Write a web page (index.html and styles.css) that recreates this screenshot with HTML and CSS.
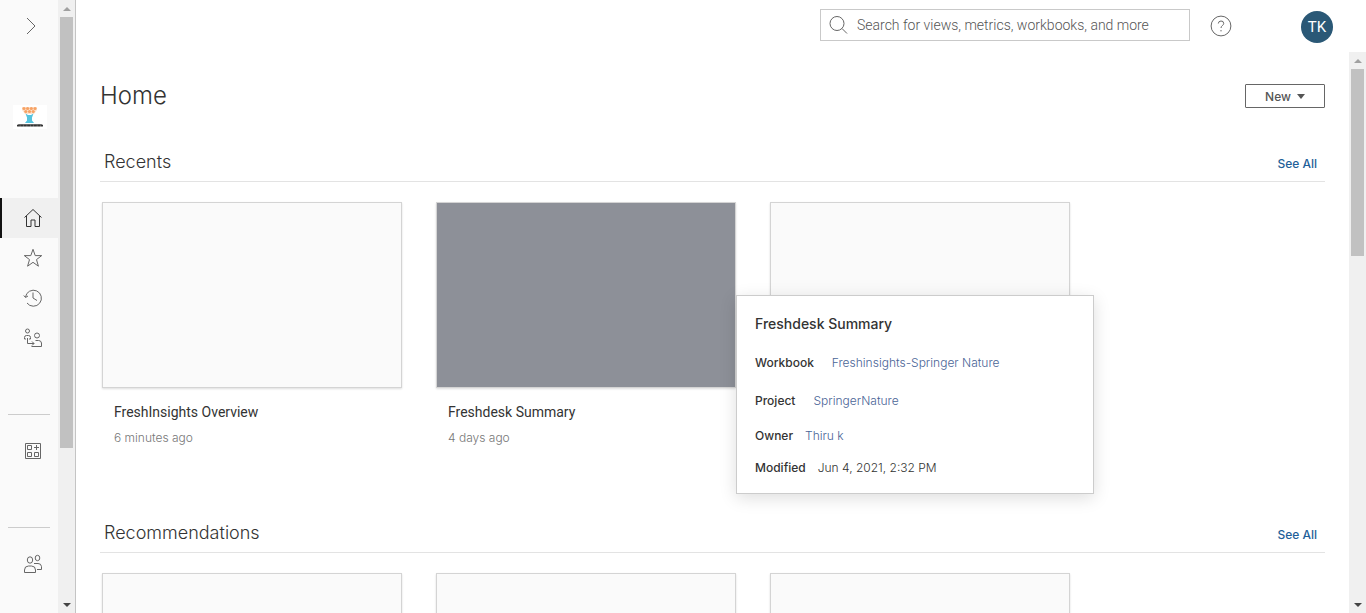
FILE: index.html
```html
<!DOCTYPE html>
<html lang="en">
<head>
<meta charset="utf-8">
<title>Home</title>
<link rel="stylesheet" href="styles.css">
</head>
<body>
<div class="app">
  <aside class="sidebar">
    <nav class="rail" aria-label="Main">
      <button class="expand" type="button" aria-label="Expand navigation">
        <svg width="12" height="18" viewBox="0 0 12 18"><path d="M2 1l8 8-8 8"/></svg>
      </button>
      <a class="logo" href="#" aria-label="Site logo">
        <svg width="34" height="24" viewBox="0 0 34 24">
          <rect width="34" height="24" fill="#fff"/>
          <path d="M9 2h15v3l-3 4h-9L9 5z" fill="#fde3cf"/>
          <g fill="#f7a264"><circle cx="11" cy="3.500" r="1.600"/><circle cx="14.600" cy="3.500" r="1.600"/><circle cx="18.300" cy="3.500" r="1.600"/><circle cx="22" cy="3.500" r="1.600"/><circle cx="12.800" cy="6.500" r="1.600"/><circle cx="16.500" cy="6.500" r="1.600"/><circle cx="20.200" cy="6.500" r="1.600"/></g>
          <path d="M12.500 8.500l2.500 1.500h3l2.500-1.500-1.500 4v3l2 2.500h-9l2-2.500v-3z" fill="#55c3de"/>
          <path d="M4 21.500l1.500-2.500h23l1.500 2.500z" fill="#777"/>
          <path d="M4 20.500h26" stroke="#333" stroke-width="1.500" stroke-dasharray="2.800 .6"/>
        </svg>
      </a>
      <a class="item active" href="#" aria-label="Home">
        <svg width="20" height="20" viewBox="0 0 20 20"><path d="M1.500 9.500L10 1.500l8.500 8M3.500 8v10.500h4.500V12h4v6.500h4.500V8"/></svg>
      </a>
      <a class="item" href="#" aria-label="Favorites">
        <svg width="20" height="20" viewBox="0 0 20 20"><path d="M10 1.300l2.200 6.300h6.500l-5.200 4 1.900 6.600L10 14.300l-5.400 3.900 1.900-6.600-5.200-4h6.500z"/></svg>
      </a>
      <a class="item" href="#" aria-label="Recents">
        <svg width="20" height="20" viewBox="0 0 20 20"><path d="M2.500 9A8 8 0 1 1 4 15M10 4.500V10l4 2.500M.8 7.500l1.700 2L5 8"/></svg>
      </a>
      <a class="item" href="#" aria-label="Shared with me">
        <svg width="20" height="20" viewBox="0 0 20 20"><circle cx="4.500" cy="3" r="2"/><circle cx="14" cy="7.500" r="2.500"/><path d="M1.500 11V9.500a2 2 0 0 1 2-2h2a2 2 0 0 1 2 2V11H6M1.500 11H3M4.500 10v5.500H11M9 13.500l2 2-2 2M8.500 18.500h10V15a3 3 0 0 0-3-2.500h-3"/></svg>
      </a>
      <div class="group">
        <a class="item" href="#" aria-label="Collections">
          <svg width="20" height="20" viewBox="0 0 20 20"><path d="M2.500 2.500h15v15h-15zM4.500 4.500h4v4h-4zM4.500 11.500h4v4h-4zM11.500 11.500h4v4h-4zM13.500 4v5M11 6.500h5"/></svg>
        </a>
      </div>
      <div class="group">
        <a class="item" href="#" aria-label="Users">
          <svg width="20" height="20" viewBox="0 0 20 20"><ellipse cx="7" cy="6" rx="2.700" ry="3.200"/><ellipse cx="14.500" cy="4" rx="2.300" ry="2.700"/><path d="M1.500 18.500V16a4 4 0 0 1 4-4h3a4 4 0 0 1 4 4v2.500zM11 9.500h4a3.500 3.500 0 0 1 3.500 3v3H14"/></svg>
        </a>
      </div>
    </nav>
    <div class="scrollbar" aria-hidden="true">
      <i class="arrow up"></i><div class="track"><i class="thumb rail-thumb"></i></div><i class="arrow down"></i>
    </div>
  </aside>

  <div class="page">
    <header class="topbar">
      <label class="search">
        <svg width="20" height="20" viewBox="0 0 20 20"><circle cx="8" cy="8.500" r="7"/><path d="M13 13.500l5 5"/></svg>
        <input type="search" aria-label="Search" placeholder="Search for views, metrics, workbooks, and more">
      </label>
      <button class="help" type="button" aria-label="Help">
        <svg width="22" height="22" viewBox="0 0 22 22"><circle cx="11" cy="11" r="9.900"/><path d="M8.300 8.500A2.700 2.700 0 0 1 11 6a2.500 2.500 0 0 1 2.700 2.500c0 2-2.700 2-2.700 4.500M11 15v1.400"/></svg>
      </button>
      <button class="avatar" type="button">TK</button>
    </header>

    <div class="body">
      <main class="content">
        <div class="title-row">
          <h1>Home</h1>
          <button class="new" type="button">New <i class="caret"></i></button>
        </div>

        <section>
          <div class="section-head"><h2>Recents</h2><a href="#">See All</a></div>
          <div class="cards">
            <article class="card">
              <div class="thumbnail"></div>
              <h3>FreshInsights Overview</h3>
              <p>6 minutes ago</p>
            </article>
            <article class="card">
              <div class="thumbnail hovered"></div>
              <h3>Freshdesk Summary</h3>
              <p>4 days ago</p>
              <div class="tooltip" role="tooltip">
                <h4>Freshdesk Summary</h4>
                <dl>
                  <div class="row wide"><dt>Workbook</dt><dd><a href="#">Freshinsights-Springer Nature</a></dd></div>
                  <div class="row wide"><dt>Project</dt><dd><a href="#">SpringerNature</a></dd></div>
                  <div class="row"><dt>Owner</dt><dd><a href="#">Thiru k</a></dd></div>
                  <div class="row"><dt>Modified</dt><dd>Jun 4, 2021, 2:32 PM</dd></div>
                </dl>
              </div>
            </article>
            <article class="card"><div class="thumbnail"></div></article>
          </div>
        </section>

        <section>
          <div class="section-head"><h2>Recommendations</h2><a href="#">See All</a></div>
          <div class="cards">
            <article class="card"><div class="thumbnail"></div></article>
            <article class="card"><div class="thumbnail"></div></article>
            <article class="card"><div class="thumbnail"></div></article>
          </div>
        </section>
      </main>
      <div class="scrollbar" aria-hidden="true">
        <i class="arrow up"></i><div class="track"><i class="thumb page-thumb"></i></div><i class="arrow down"></i>
      </div>
    </div>
  </div>
</div>
</body>
</html>
```
FILE: styles.css
```css
* { box-sizing: border-box; }
body {
  margin: 0;
  font-family: Inter, "Liberation Sans", sans-serif;
  font-size: 12px;
  color: #333;
  background: #fff;
}
h1, h2, h3, h4, p, dl, dd { margin: 0; font-weight: 300; }
a { text-decoration: none; color: #1f5f99; }
button { font: inherit; padding: 0; border: 0; background: none; }
svg { display: block; fill: none; stroke: #666; stroke-width: 1; }
.app { display: flex; height: 100vh; overflow: hidden; }

/* Navigation rail */
.sidebar { display: flex; flex: none; border-right: 1px solid #c4c4c4; }
.rail { width: 58px; background: #fafafa; display: flex; flex-direction: column; overflow: hidden; }
.expand { height: 52px; padding-left: 4px; display: flex; align-items: center; justify-content: center; flex: none; }
.logo { margin: 53px 0 69px; padding-left: 13px; }
.logo svg { stroke: none; }
.item { height: 40px; padding-left: 21px; border-left: 2px solid transparent; display: flex; align-items: center; flex: none; }
.active { border-color: #111; background: #f0f0f0; }
.active svg { stroke: #333; }
.group { height: 73px; margin-top: 40px; padding-top: 17px; position: relative; flex: none; }
.group:first-of-type { margin-top: 56px; }
.group::before { content: ""; position: absolute; top: 0; left: 8px; right: 8px; height: 1px; background: #ccc; }

/* Scrollbars */
.scrollbar { width: 17px; background: #f0f0f0; display: flex; flex-direction: column; flex: none; }
.arrow { height: 17px; display: flex; align-items: center; justify-content: center; }
.arrow::before { content: ""; border: 4px solid transparent; }
.up::before { border-top: 0; border-bottom-color: #a0a0a0; }
.down::before { border-bottom: 0; border-top-color: #444; }
.track { flex: 1; padding: 0 2px; }
.thumb { display: block; background: #c1c1c1; }
.rail-thumb { height: 74.5%; }
.page-thumb { height: 35.5%; }

/* Top bar */
.page { flex: 1; min-width: 0; display: flex; flex-direction: column; }
.topbar { height: 52px; padding-right: 33px; display: flex; align-items: center; justify-content: flex-end; flex: none; }
.search { width: 370px; height: 32px; margin-bottom: 2px; padding: 0 8px; border: 1px solid #c9c9c9; display: flex; align-items: center; gap: 8px; }
.search input { flex: 1; min-width: 0; border: 0; padding: 0; outline: 0; background: none; font: 300 14px/20px Roboto, sans-serif; }
.search input::placeholder { color: #555; }
.help { margin: 0 69px 0 20px; }
.avatar { width: 32px; height: 32px; margin-top: 2px; border-radius: 50%; background: #2a5876; color: #fff; font: 400 15px/20px Roboto, sans-serif; }

/* Page content */
.body { flex: 1; min-height: 0; display: flex; }
.content { flex: 1; min-width: 0; padding: 0 24px; overflow: hidden; }
.title-row { height: 88px; display: flex; align-items: center; justify-content: space-between; }
h1 { font-size: 24px; line-height: 32px; }
.new { width: 80px; height: 24px; border: 1px solid #666; border-radius: 1px; color: #555; font-weight: 500; display: flex; align-items: center; justify-content: center; gap: 6px; }
.caret { border: 4px solid transparent; border-top: 5px solid #555; border-bottom: 0; }
.section-head { height: 42px; padding: 2px 8px 0 4px; border-bottom: 1px solid #e3e3e3; display: flex; align-items: center; justify-content: space-between; }
h2 { font-size: 18px; line-height: 24px; }
.section-head a { font-weight: 500; line-height: 16px; margin-top: 4px; }
.cards { height: 329px; padding: 20px 2px 0; display: flex; gap: 34px; }
.card { width: 300px; position: relative; flex: none; }
.thumbnail { height: 186px; border: 1px solid #d4d4d4; background: #fafafa; box-shadow: 0 1px 2px #0002; }
.hovered { background: #8d9098; }
.card h3 { margin: 14px 12px 0; font: 400 14px/20px Roboto, sans-serif; }
.card p { margin: 8px 12px 0; line-height: 16px; color: #777; }

/* Item details */
.tooltip { position: absolute; z-index: 2; top: 93px; left: 300px; width: 358px; padding: 18px 18px 9px; border: 1px solid #ccc; background: #fff; box-shadow: 0 4px 16px #0002; }
.tooltip h4 { font-size: 14px; line-height: 20px; font-weight: 500; margin-bottom: 10px; }
.row { height: 32px; display: flex; align-items: center; gap: 12px; line-height: 16px; }
.wide { height: 38px; gap: 18px; }
dt { font-weight: 500; }
dd a { color: #4a6496; }
```
